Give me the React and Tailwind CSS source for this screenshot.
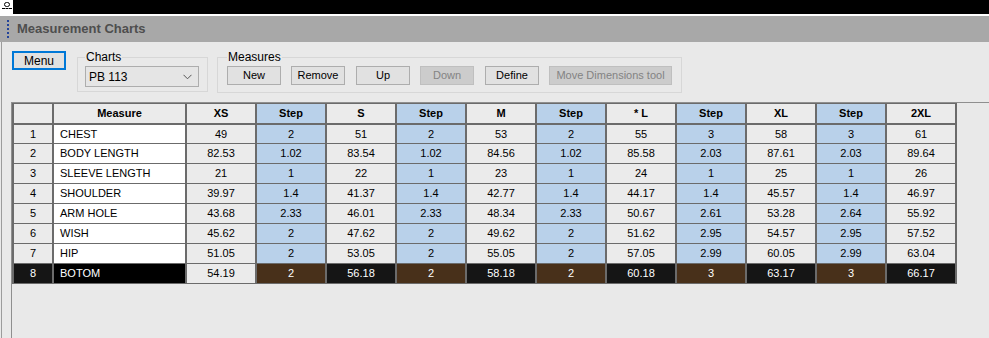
import React from 'react'

const sizes = ['XS', 'Step', 'S', 'Step', 'M', 'Step', '* L', 'Step', 'XL', 'Step', '2XL']

const rows = [
  ['CHEST', '49', '2', '51', '2', '53', '2', '55', '3', '58', '3', '61'],
  ['BODY LENGTH', '82.53', '1.02', '83.54', '1.02', '84.56', '1.02', '85.58', '2.03', '87.61', '2.03', '89.64'],
  ['SLEEVE LENGTH', '21', '1', '22', '1', '23', '1', '24', '1', '25', '1', '26'],
  ['SHOULDER', '39.97', '1.4', '41.37', '1.4', '42.77', '1.4', '44.17', '1.4', '45.57', '1.4', '46.97'],
  ['ARM HOLE', '43.68', '2.33', '46.01', '2.33', '48.34', '2.33', '50.67', '2.61', '53.28', '2.64', '55.92'],
  ['WISH', '45.62', '2', '47.62', '2', '49.62', '2', '51.62', '2.95', '54.57', '2.95', '57.52'],
  ['HIP', '51.05', '2', '53.05', '2', '55.05', '2', '57.05', '2.99', '60.05', '2.99', '63.04'],
  ['BOTOM', '54.19', '2', '56.18', '2', '58.18', '2', '60.18', '3', '63.17', '3', '66.17'],
]

const Button = ({ children, disabled, width }) => (
  <button
    className={
      'h-[19px] border text-[11px] leading-none ' +
      width +
      (disabled
        ? ' bg-[#cccccc] border-[#bfbfbf] text-[#838383]'
        : ' bg-[#e1e1e1] border-[#adadad] text-black')
    }
  >
    {children}
  </button>
)

const cell = 'h-[20px] p-0 border-x-2 border-y border-[#6b6b6b] text-center text-[11px]'

const App = () => {
  const selected = rows.length - 1

  return (
    <div className="w-[989px] h-[338px] overflow-hidden bg-[#e9e9e9] font-['Liberation_Sans',Arial,sans-serif]">
      {/* window top strip */}
      <div className="h-[14px] bg-black flex">
        <div className="w-[13px] h-[14px] bg-white flex flex-col items-center pt-[2px]">
          <div className="w-[6px] h-[5px] rounded-full border border-black"></div>
          <div className="w-[10px] mt-[1px] border-t border-dashed border-black"></div>
        </div>
      </div>
      <div className="h-[2px] bg-white"></div>

      {/* title bar */}
      <div className="h-[26px] bg-[#a8a8a8] flex items-center">
        <div className="ml-[7px] h-[18px] border-l-2 border-dotted border-[#23449a]"></div>
        <span className="ml-[8px] text-[13px] font-bold text-[#4e4e4e]">Measurement Charts</span>
      </div>

      <div className="ml-px h-full border-l border-[#9c9c9c]">
        {/* toolbar */}
        <div className="flex items-start pt-[9px] pl-[10px]">
          <button className="w-[54px] h-[19px] border-2 border-[#0078d7] bg-[#e1e1e1] text-[12px] leading-none">
            Menu
          </button>

          <fieldset className="ml-[11px] w-[131px] border border-[#d7d7d7] pl-[7px] pt-[2px] pb-[4px]">
            <legend className="px-px text-[12px] leading-[13px]">Charts</legend>
            <div className="w-[114px] h-[21px] border border-[#adadad] bg-[#e5e5e5] flex items-center justify-between pl-[3px] pr-[6px]">
              <span className="text-[12px]">PB 113</span>
              <svg width="9" height="6" viewBox="0 0 9 6">
                <path d="M0.5 0.8 L4.5 4.8 L8.5 0.8" fill="none" stroke="#555" strokeWidth="1" />
              </svg>
            </div>
          </fieldset>

          <fieldset className="ml-[9px] w-[465px] border border-[#d7d7d7] pl-[9px] pt-[2px] pb-[7px]">
            <legend className="px-px text-[12px] leading-[13px]">Measures</legend>
            <div className="flex items-center">
              <Button width="w-[54px]">New</Button>
              <div className="w-[10px]"></div>
              <Button width="w-[54px]">Remove</Button>
              <div className="w-[11px]"></div>
              <Button width="w-[54px]">Up</Button>
              <div className="w-[10px]"></div>
              <Button width="w-[54px]" disabled>Down</Button>
              <div className="w-[11px]"></div>
              <Button width="w-[54px]">Define</Button>
              <div className="w-[10px]"></div>
              <Button width="w-[123px]" disabled>Move Dimensions tool</Button>
            </div>
          </fieldset>
        </div>

        {/* grid */}
        <div className="mt-[9px] ml-[9px] h-[300px] border-t border-l border-[#8f8f8f]">
          <table className="table-fixed border-collapse w-[943px]">
            <colgroup>
              <col className="w-[40px]" />
              <col className="w-[133px]" />
              {sizes.map((s, i) => (
                <col key={i} className="w-[70px]" />
              ))}
            </colgroup>
            <thead>
              <tr>
                <th className={cell + ' h-[19px] bg-[#ebebeb] border-b-2'}></th>
                <th className={cell + ' h-[19px] bg-[#ebebeb] border-b-2 font-bold'}>Measure</th>
                {sizes.map((s, i) => (
                  <th
                    key={i}
                    className={cell + ' h-[19px] border-b-2 font-bold ' + (s === 'Step' ? 'bg-[#b9d1ea]' : 'bg-[#ebebeb]')}
                  >
                    {s}
                  </th>
                ))}
              </tr>
            </thead>
            <tbody>
              {rows.map((r, ri) => {
                const sel = ri === selected
                return (
                  <tr key={ri}>
                    <td className={cell + (sel ? ' bg-[#151515] text-white' : ' bg-[#ebebeb]')}>{ri + 1}</td>
                    <td className={cell + ' text-left pl-[6px]' + (sel ? ' bg-black text-white' : ' bg-white')}>
                      {r[0]}
                    </td>
                    {r.slice(1).map((v, ci) => {
                      const step = ci % 2 === 1
                      let bg = step ? ' bg-[#b9d1ea]' : ' bg-[#ebebeb]'
                      if (sel && ci > 0) bg = step ? ' bg-[#48301a] text-white' : ' bg-[#151515] text-white'
                      return (
                        <td key={ci} className={cell + bg}>
                          {v}
                        </td>
                      )
                    })}
                  </tr>
                )
              })}
            </tbody>
          </table>
        </div>
      </div>
    </div>
  )
}

export default App
